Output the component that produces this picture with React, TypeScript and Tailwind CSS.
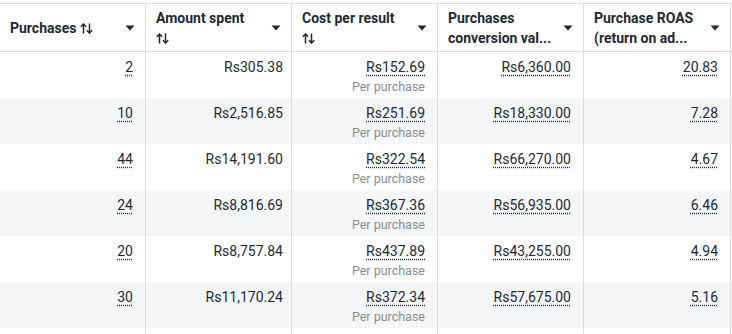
const font = { fontFamily: 'Roboto, "Noto Sans", Arial, sans-serif' };

interface Row {
  purchases: string;
  spent: string;
  cost: string;
  value: string;
  roas: string;
}

const rows: Row[] = [
  { purchases: '2', spent: 'Rs305.38', cost: 'Rs152.69', value: 'Rs6,360.00', roas: '20.83' },
  { purchases: '10', spent: 'Rs2,516.85', cost: 'Rs251.69', value: 'Rs18,330.00', roas: '7.28' },
  { purchases: '44', spent: 'Rs14,191.60', cost: 'Rs322.54', value: 'Rs66,270.00', roas: '4.67' },
  { purchases: '24', spent: 'Rs8,816.69', cost: 'Rs367.36', value: 'Rs56,935.00', roas: '6.46' },
  { purchases: '20', spent: 'Rs8,757.84', cost: 'Rs437.89', value: 'Rs43,255.00', roas: '4.94' },
  { purchases: '30', spent: 'Rs11,170.24', cost: 'Rs372.34', value: 'Rs57,675.00', roas: '5.16' },
];

const widths = ['w-[146px]', 'w-[146px]', 'w-[146px]', 'w-[146px]', 'w-[147px]'];

function Caret() {
  return (
    <svg width="10" height="6" viewBox="0 0 10 6" className="shrink-0">
      <path d="M0.5 0.5 L9.5 0.5 L5 5.5 Z" fill="#1c2b33" />
    </svg>
  );
}

function SortArrows() {
  return (
    <svg width="13" height="11" viewBox="0 0 13 11" className="inline-block align-[-1px]">
      <path
        d="M3.5 10.5 V1 M0.8 3.7 L3.5 1 L6.2 3.7 M9.5 0.5 V10 M6.8 7.3 L9.5 10 L12.2 7.3"
        stroke="#1c2b33"
        strokeWidth="1.5"
        fill="none"
      />
    </svg>
  );
}

function HeaderCell({ w, children }: { w: string; children: React.ReactNode }) {
  return (
    <div className={`${w} shrink-0 border-r border-[#dadde1] flex items-center justify-between pl-[10px] pr-[10px]`}>
      <div className="text-[14px] leading-[20px] font-bold text-[#1c2b33] whitespace-nowrap">{children}</div>
      <Caret />
    </div>
  );
}

function Cell({ w, value, dotted, sub, pr = 'pr-[12px]' }: { w: string; value: string; dotted?: boolean; sub?: string; pr?: string }) {
  return (
    <div className={`${w} shrink-0 border-r border-[#dadde1] flex flex-col items-end ${pr} pt-[6px]`}>
      <span
        className={`text-[14px] leading-[18px] text-[#1c2b33] ${dotted ? 'underline decoration-dotted decoration-[#1c2b33] underline-offset-[3px]' : ''}`}
      >
        {value}
      </span>
      {sub && <span className="text-[12.5px] leading-[16px] mt-[3px] text-[#8a8d91]">{sub}</span>}
    </div>
  );
}

export default function App() {
  return (
    <div className="w-[732px] h-[334px] overflow-hidden bg-white pt-[3px]" style={font}>
      <div className="flex h-[49px] border-t border-b border-[#dadde1]">
        <HeaderCell w={widths[0]}>
          <div>
            Purchases <SortArrows />
          </div>
        </HeaderCell>
        <HeaderCell w={widths[1]}>
          <div>Amount spent</div>
          <div>
            <SortArrows />
          </div>
        </HeaderCell>
        <HeaderCell w={widths[2]}>
          <div>Cost per result</div>
          <div>
            <SortArrows />
          </div>
        </HeaderCell>
        <HeaderCell w={widths[3]}>
          <div>Purchases</div>
          <div>conversion val...</div>
        </HeaderCell>
        <HeaderCell w={widths[4]}>
          <div>Purchase ROAS</div>
          <div>(return on ad...</div>
        </HeaderCell>
      </div>
      {rows.map((r, i) => (
        <div key={i} className={`flex h-[46px] ${i % 2 === 1 ? 'bg-[#f5f6f7]' : 'bg-white'}`}>
          <Cell w={widths[0]} value={r.purchases} dotted />
          <Cell w={widths[1]} value={r.spent} pr="pr-[8px]" />
          <Cell w={widths[2]} value={r.cost} dotted sub="Per purchase" />
          <Cell w={widths[3]} value={r.value} dotted />
          <Cell w={widths[4]} value={r.roas} dotted />
        </div>
      ))}
      <div className="flex h-[46px] bg-white">
        {widths.map((w, i) => (
          <div key={i} className={`${w} shrink-0 border-r border-[#dadde1]`} />
        ))}
      </div>
    </div>
  );
}
